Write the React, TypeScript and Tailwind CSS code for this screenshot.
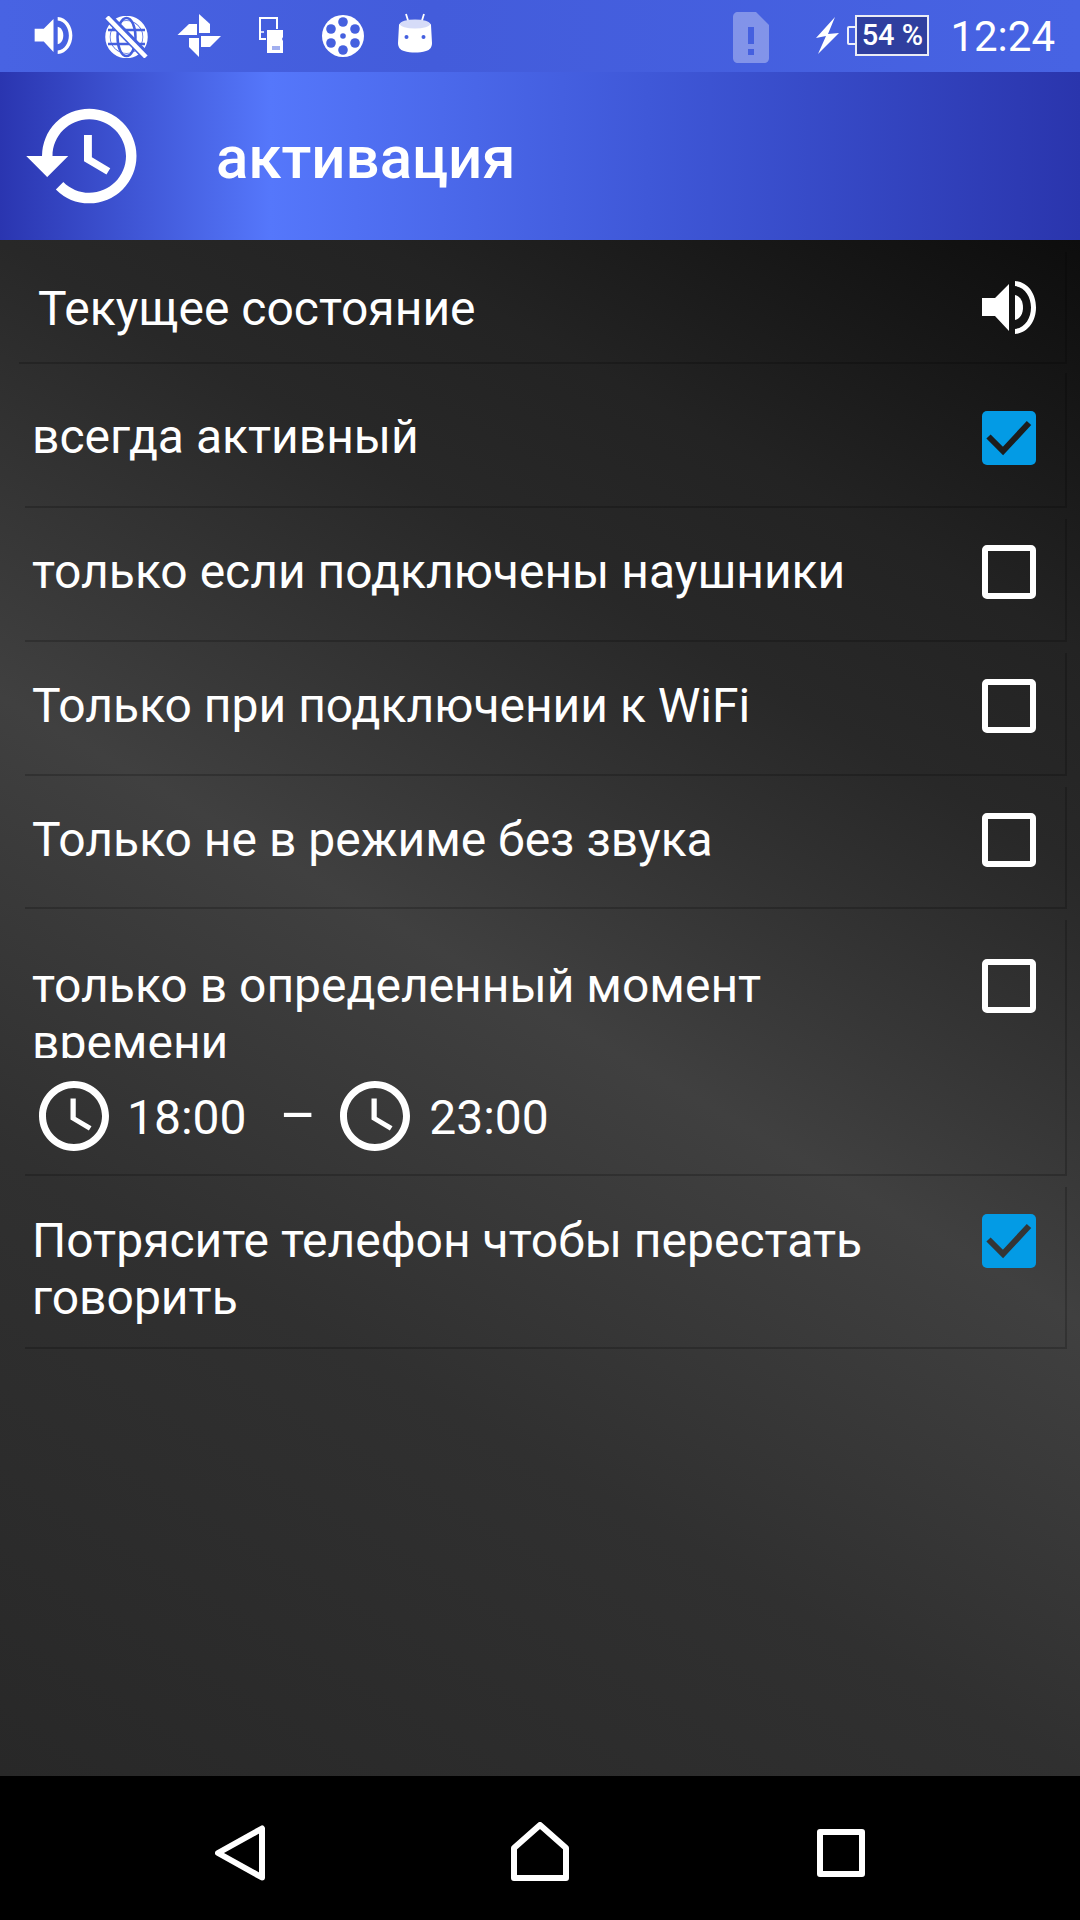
const FONT = "font-[Roboto,sans-serif]";

function Speaker({ className }: { className: string }) {
  return (
    <svg viewBox="0 0 54 53" className={className} fill="currentColor">
      <path d="M0 17H13L27 3V50L13 35H0Z" />
      <path d="M33 0C46 1 54 13 54 26.5C54 40 46 52 33 53V48C43 47 49 37 49 26.5C49 16 43 6 33 5Z" />
      <path d="M33 14C38 15 41 20 41 26.5C41 33 38 38 33 39Z" />
    </svg>
  );
}

function Globe() {
  return (
    <svg viewBox="0 0 43 42" className="mt-[16px] ml-[32px] h-[42px] w-[43px]" fill="none">
      <circle cx="21.5" cy="21" r="19" stroke="white" strokeWidth="4.5" />
      <circle cx="21.5" cy="21" r="16" fill="white" />
      <path d="M3 14H40M3 28H40" stroke="#4560df" strokeWidth="2.5" />
      <ellipse cx="21.5" cy="21" rx="9" ry="19" stroke="#4560df" strokeWidth="2.5" />
      <path d="M3 1L41 40" stroke="#4560df" strokeWidth="9" />
      <path d="M2 1L41 41" stroke="white" strokeWidth="4.5" />
    </svg>
  );
}

function Pinwheel() {
  return (
    <svg viewBox="176 14 44 44" className="mt-[14px] ml-[29px] h-[44px] w-[44px]" fill="white">
      <path d="M198 14L209 24V33H198Z" />
      <path d="M176.500 35L188 24H196V35Z" />
      <path d="M200 36H220L209 47H200Z" />
      <path d="M188 38H198V57L188 47Z" />
    </svg>
  );
}

function SdCard() {
  return (
    <svg viewBox="258 17 25 36" className="mt-[17px] ml-[38px] h-[36px] w-[25px]">
      <path d="M276 29V18H259V39H265" fill="none" stroke="white" strokeWidth="2" />
      <path d="M259 32H263" stroke="white" strokeWidth="1.500" />
      <path d="M266 30H282V37L281 39L282 41V53H266V38Z" fill="white" />
      <path d="M272 46V50M274 46V50M276 46V50M278 46V50" stroke="#4560df" strokeWidth="1" />
    </svg>
  );
}

function FilmReel() {
  return (
    <svg viewBox="0 0 42 42" className="mt-[15px] ml-[38px] h-[42px] w-[42px]">
      <circle cx="21" cy="21" r="21" fill="white" />
      {[[21, 7], [33, 14], [33, 28], [21, 35], [9, 28], [9, 14]].map(([cx, cy]) => (
        <circle key={`${cx}-${cy}`} cx={cx} cy={cy} r="4.800" fill="#4560df" />
      ))}
      <circle cx="21" cy="21" r="2.800" fill="#4560df" />
    </svg>
  );
}

function Marshmallow() {
  return (
    <svg viewBox="0 0 34 40" className="mt-[13px] ml-[34px] h-[40px] w-[34px]">
      <path d="M8 1L10.500 9M26 1L23.500 9" stroke="white" strokeWidth="1.800" />
      <path d="M1 12C1 7 33 7 33 12L34 30C34 34 32 37 28 38C21 40 13 40 6 38C2 37 0 34 0 30Z" fill="white" />
      <ellipse cx="17" cy="11" rx="15" ry="4.500" fill="#d6dcf8" />
      <circle cx="8.500" cy="24" r="2" fill="#4560df" />
      <circle cx="25.500" cy="24" r="2" fill="#4560df" />
    </svg>
  );
}

function StatusBar() {
  return (
    <div className={`${FONT} flex h-[72px] items-start bg-[linear-gradient(90deg,#4863e3,#435cdb_40%,#4763e3)] pl-[34px] pr-[25px] text-white`}>
      <Speaker className="mt-[17px] h-[37px] w-[39px]" />
      <Globe />
      <Pinwheel />
      <SdCard />
      <FilmReel />
      <Marshmallow />
      <div className="flex-1" />
      <svg viewBox="0 0 36 51" className="mt-[12px] h-[51px] w-[36px]">
        <path d="M5 0H23L36 13V46C36 49 34 51 31 51H5C2 51 0 49 0 46V5C0 2 2 0 5 0Z" fill="white" fillOpacity="0.33" />
        <path d="M15 15H21V32H15ZM15 37H21V43H15Z" fill="#4560df" />
      </svg>
      <svg viewBox="0 0 23 37" className="mt-[17px] ml-[47px] h-[37px] w-[23px]" fill="white">
        <path d="M19 0L0 21L10 19L2 37L23 16L12 17Z" />
      </svg>
      <div className="mt-[15px] ml-[8px] flex h-[41px] items-center">
        <div className="h-[19px] w-[8px] rounded-l-[2px] border-2 border-r-0 border-white/90 bg-[#4560df]" />
        <div className="flex h-[41px] w-[74px] items-center justify-center border-2 border-white/90 bg-[#2f3f9f] text-[29px] font-medium">
          54 %
        </div>
      </div>
      <div className="mt-[12px] ml-[21px] text-[42px] leading-[49px]">12:24</div>
    </div>
  );
}

function Toolbar() {
  return (
    <div className={`${FONT} flex h-[168px] items-center bg-[linear-gradient(90deg,#2a35b0,#5577fb_25%,#3f58d8_60%,#2a35ad)] text-white`}>
      <svg viewBox="0 0 24 24" className="ml-[21px] h-[126px] w-[126px]" fill="currentColor">
        <path d="M13 3a9 9 0 0 0-9 9H1l3.890 3.890.070.140L9 12H6c0-3.870 3.130-7 7-7s7 3.130 7 7-3.130 7-7 7c-1.930 0-3.680-.790-4.940-2.060l-1.420 1.420A8.954 8.954 0 0 0 13 21a9 9 0 0 0 0-18zm-1 5v5l4.280 2.540.720-1.210-3.500-2.080V8H12z" />
      </svg>
      <h1 className="mt-[4px] ml-[69px] text-[60px] font-medium">активация</h1>
    </div>
  );
}

function Box({ tick, top }: { tick?: string; top: string }) {
  if (tick) {
    return (
      <div className={`${top} h-[54px] w-[54px] shrink-0 rounded-[5px] bg-[#039be5]`}>
        <svg viewBox="0 0 54 54" className="h-[54px] w-[54px]" fill="none" stroke={tick} strokeWidth="6">
          <path d="M6.500 25.500L21 40L47 12" />
        </svg>
      </div>
    );
  }
  return <div className={`${top} h-[54px] w-[54px] shrink-0 rounded-[5px] border-[6px] border-white`} />;
}

function Clock() {
  return (
    <svg viewBox="0 0 24 24" className="h-[84px] w-[84px]" fill="white">
      <path d="M11.990 2C6.470 2 2 6.480 2 12s4.470 10 9.990 10C17.520 22 22 17.520 22 12S17.520 2 11.990 2zM12 20c-4.420 0-8-3.580-8-8s3.580-8 8-8 8 3.580 8 8-3.580 8-8 8zm.500-13H11v6l5.250 3.150.750-1.230-4.500-2.670z" />
    </svg>
  );
}

const rows = [
  { text: "всегда активный", tick: "#1d1d1d", rowClass: "mt-[9px] h-[135px]", textTop: "mt-[35px]", boxTop: "mt-[38px]" },
  { text: "только если подключены наушники", rowClass: "mt-[11px] h-[123px]", textTop: "mt-[24px]", boxTop: "mt-[26px]" },
  { text: "Только при подключении к WiFi", rowClass: "mt-[11px] h-[123px]", textTop: "mt-[24px]", boxTop: "mt-[26px]" },
  { text: "Только не в режиме без звука", rowClass: "mt-[11px] h-[122px]", textTop: "mt-[24px]", boxTop: "mt-[26px]" },
];

const rowBase = "ml-[25px] mr-[13px] flex justify-between border-r-2 border-b-2 border-black/20 pl-[7px] pr-[29px]";

export default function App() {
  return (
    <div className={`${FONT} flex h-[1920px] w-[1080px] flex-col overflow-hidden bg-black`}>
      <StatusBar />
      <Toolbar />
      <main className="flex h-[1536px] flex-col bg-[linear-gradient(210deg,#0d0d0d_0%,#232323_19%,#282828_29%,#404040_50%,#303030_71%,#282828_100%)] pt-[12px] text-[48px] leading-[57px] text-white">
        <div className="mr-[13px] ml-[19px] flex h-[112px] items-center justify-between border-r-2 border-b-2 border-black/20 pr-[29px] pl-[19px]">
          <span className="mt-[3px]">Текущее состояние</span>
          <Speaker className="h-[53px] w-[54px]" />
        </div>

        {rows.map((row) => (
          <div key={row.text} className={`${rowBase} ${row.rowClass}`}>
            <div className={`${row.textTop} w-[860px]`}>{row.text}</div>
            <Box tick={row.tick} top={row.boxTop} />
          </div>
        ))}

        <div className={`${rowBase} mt-[11px] h-[256px]`}>
          <div className="w-[860px]">
            <div className="mt-[37px] h-[101px] overflow-hidden">только в определенный момент времени</div>
            <div className="mt-[16px] flex items-center">
              <Clock />
              <span className="mt-[2px] ml-[11px]">18:00</span>
              <span className="ml-[33px] text-[56px]">–</span>
              <div className="ml-[17px]">
                <Clock />
              </div>
              <span className="mt-[2px] ml-[12px]">23:00</span>
            </div>
          </div>
          <Box top="mt-[39px]" />
        </div>

        <div className={`${rowBase} mt-[11px] h-[162px]`}>
          <div className="mt-[25px] w-[860px]">Потрясите телефон чтобы перестать говорить</div>
          <Box tick="#353535" top="mt-[27px]" />
        </div>
      </main>

      <nav className="flex h-[144px] items-start bg-black">
        <svg viewBox="0 0 50 56" className="mt-[49px] ml-[215px] h-[56px] w-[50px]" fill="none" stroke="white" strokeWidth="6" strokeLinejoin="round">
          <path d="M3 28L47 3.500V52.500Z" />
        </svg>
        <svg viewBox="0 0 58 59" className="mt-[46px] ml-[246px] h-[59px] w-[58px]" fill="none" stroke="white" strokeWidth="6" strokeLinejoin="round">
          <path d="M29 3L55 26V56H3V26Z" />
        </svg>
        <div className="mt-[53px] ml-[248px] h-[48px] w-[48px] rounded-[3px] border-[6px] border-white" />
      </nav>
    </div>
  );
}
